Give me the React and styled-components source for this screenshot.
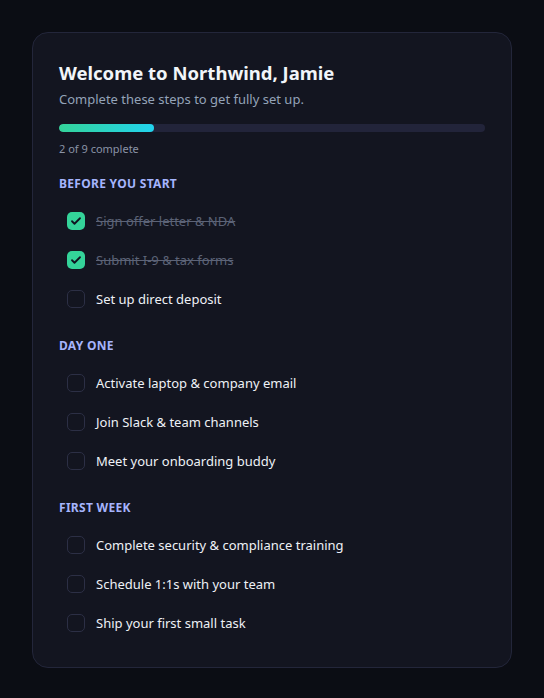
import React from "react";
import styled, { createGlobalStyle } from "styled-components";

const Global = createGlobalStyle`
  html, body { margin: 0; padding: 0; background: #0b0d14; }
  body { font-family: "Noto Sans", "Open Sans", sans-serif; -webkit-font-smoothing: antialiased; }
  * { box-sizing: border-box; }
`;

const Page = styled.div`
  min-height: 698px;
  padding: 32px;
  background: #0b0d14;
`;

const Card = styled.div`
  width: 480px;
  background: #131520;
  border: 1px solid #23263a;
  border-radius: 16px;
  padding: 27px 26px 25px;
`;

const Title = styled.h1`
  margin: 0;
  font-size: 18.5px;
  line-height: 26px;
  font-weight: 700;
  color: #f1f5f9;
`;

const Subtitle = styled.p`
  margin: 4px 0 0;
  font-size: 13px;
  line-height: 18px;
  color: #94a3b8;
`;

const Track = styled.div`
  margin-top: 16px;
  height: 8px;
  border-radius: 4px;
  background: #22243a;
  overflow: hidden;
`;

const Fill = styled.div`
  height: 100%;
  border-radius: 4px;
  background: linear-gradient(90deg, #34d399, #22d3ee);
`;

const Count = styled.div`
  margin-top: 9px;
  font-size: 11px;
  line-height: 16px;
  color: #8a93a6;
`;

const Sections = styled.div`
  margin-top: 19px;
  display: flex;
  flex-direction: column;
  gap: 20px;
`;

const SectionTitle = styled.h2`
  margin: 0 0 9px;
  font-size: 12px;
  line-height: 16px;
  font-weight: 700;
  letter-spacing: 0.3px;
  text-transform: uppercase;
  color: #a5b4fc;
`;

const List = styled.ul`
  list-style: none;
  margin: 0;
  padding: 0 0 0 8px;
  display: flex;
  flex-direction: column;
`;

const Item = styled.li`
  display: flex;
  align-items: center;
  gap: 11px;
  height: 39px;
`;

const Box = styled.span`
  flex: none;
  width: 18px;
  height: 18px;
  border-radius: 5px;
  display: flex;
  align-items: center;
  justify-content: center;
  background: ${(p) => (p.$done ? "#34d399" : "transparent")};
  border: ${(p) => (p.$done ? "none" : "1.5px solid #2c2f45")};
`;

const Label = styled.span`
  font-size: 13px;
  line-height: 18px;
  color: ${(p) => (p.$done ? "#5c6377" : "#eef1f6")};
  text-decoration: ${(p) => (p.$done ? "line-through" : "none")};
`;

const sections = [
  {
    title: "Before you start",
    items: [
      { label: "Sign offer letter & NDA", done: true },
      { label: "Submit I-9 & tax forms", done: true },
      { label: "Set up direct deposit", done: false },
    ],
  },
  {
    title: "Day one",
    items: [
      { label: "Activate laptop & company email" },
      { label: "Join Slack & team channels" },
      { label: "Meet your onboarding buddy" },
    ],
  },
  {
    title: "First week",
    items: [
      { label: "Complete security & compliance training" },
      { label: "Schedule 1:1s with your team" },
      { label: "Ship your first small task" },
    ],
  },
];

const Check = () => (
  <svg width="12" height="12" viewBox="0 0 24 24" fill="none" stroke="#0f1420" strokeWidth="3.6" strokeLinecap="round" strokeLinejoin="round">
    <path d="M4 12.5l5 5L20 6.5" />
  </svg>
);

export default function App() {
  const total = sections.reduce((n, s) => n + s.items.length, 0);
  const done = sections.reduce((n, s) => n + s.items.filter((i) => i.done).length, 0);
  return (
    <>
      <Global />
      <Page>
        <Card>
          <Title>Welcome to Northwind, Jamie</Title>
          <Subtitle>Complete these steps to get fully set up.</Subtitle>
          <Track>
            <Fill style={{ width: `${(done / total) * 100}%` }} />
          </Track>
          <Count>
            {done} of {total} complete
          </Count>
          <Sections>
            {sections.map((s) => (
              <section key={s.title}>
                <SectionTitle>{s.title}</SectionTitle>
                <List>
                  {s.items.map((it) => (
                    <Item key={it.label}>
                      <Box $done={it.done}>{it.done && <Check />}</Box>
                      <Label $done={it.done}>{it.label}</Label>
                    </Item>
                  ))}
                </List>
              </section>
            ))}
          </Sections>
        </Card>
      </Page>
    </>
  );
}
